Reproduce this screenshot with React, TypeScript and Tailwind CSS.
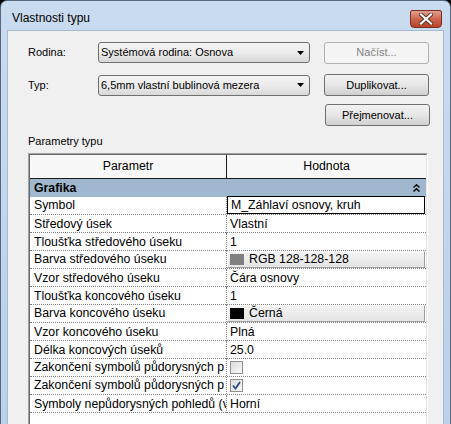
import React from 'react';

const rows: { name: string; value: string; kind?: 'edit' | 'color' | 'check' | 'checked'; swatch?: string }[] = [
  { name: 'Symbol', value: 'M_Záhlaví osnovy, kruh', kind: 'edit' },
  { name: 'Středový úsek', value: 'Vlastní' },
  { name: 'Tloušťka středového úseku', value: '1' },
  { name: 'Barva středového úseku', value: 'RGB 128-128-128', kind: 'color', swatch: '#808080' },
  { name: 'Vzor středového úseku', value: 'Čára osnovy' },
  { name: 'Tloušťka koncového úseku', value: '1' },
  { name: 'Barva koncového úseku', value: 'Černá', kind: 'color', swatch: '#000000' },
  { name: 'Vzor koncového úseku', value: 'Plná' },
  { name: 'Délka koncových úseků', value: '25.0' },
  { name: 'Zakončení symbolů půdorysných p', value: '', kind: 'check' },
  { name: 'Zakončení symbolů půdorysných p', value: '', kind: 'checked' },
  { name: 'Symboly nepůdorysných pohledů (v', value: 'Horní' },
];

const Combo = ({ text }: { text: string }) => (
  <div className="w-[212px] h-[21px] rounded-[3px] border border-[#707070] bg-gradient-to-b from-[#f4f4f4] via-[#ebebeb] to-[#d9d9d9] flex items-center pl-[2px] pr-[4px]">
    <span className="flex-1 text-[11px] leading-none text-black truncate">{text}</span>
    <svg width="7" height="4" viewBox="0 0 7 4" className="mr-[1px]">
      <path d="M0 0H7L3.5 4Z" fill="#000" />
    </svg>
  </div>
);

const Button = ({ text, disabled }: { text: string; disabled?: boolean }) => (
  <div
    className={`w-[105px] h-[22px] rounded-[3px] border flex items-center justify-center text-[11px] ${
      disabled
        ? 'border-[#adb2b5] bg-[#f4f4f4] text-[#838383]'
        : 'border-[#707070] bg-gradient-to-b from-[#f2f2f2] via-[#e6e6e6] to-[#d0d0d0] text-black'
    }`}
  >
    {text}
  </div>
);

const Checkbox = ({ checked }: { checked?: boolean }) => (
  <div className="w-[13px] h-[13px] border border-[#8e8f8f] bg-gradient-to-br from-[#dcdcdc] to-[#f8f8f8] flex items-center justify-center">
    {checked && (
      <svg width="9" height="9" viewBox="0 0 9 9">
        <path d="M1 4.5L3.5 7.5L8 1" stroke="#2a4a8c" strokeWidth="1.8" fill="none" />
      </svg>
    )}
  </div>
);

export default function App() {
  return (
    <div className="w-[451px] h-[424px] bg-black overflow-hidden" style={{ fontFamily: '"Liberation Sans", Arial, sans-serif' }}>
      <div className="w-[451px] h-[460px] rounded-t-[7px] border border-[#56697f] bg-gradient-to-b from-[#c9dbef] to-[#b9d0e9] flex flex-col">
        {/* title bar */}
        <div className="h-[29px] flex items-start pl-[11px] pr-[8px]">
          <span className="mt-[10px] text-[12px] leading-[14px] text-black">Vlastnosti typu</span>
          <div className="ml-auto mt-[9px] w-[32px] h-[18px] rounded-b-[4px] rounded-t-[2px] border border-[#7a2e22] bg-gradient-to-b from-[#e2a08f] via-[#cc6650] to-[#b9412a] flex items-center justify-center">
            <svg width="14" height="12" viewBox="0 0 14 12">
              <path d="M2 1.5L12 10.5M12 1.5L2 10.5" stroke="#5a2a22" strokeWidth="4" strokeLinecap="square" />
              <path d="M2 1.5L12 10.5M12 1.5L2 10.5" stroke="#ffffff" strokeWidth="2.2" strokeLinecap="square" />
            </svg>
          </div>
        </div>

        {/* client area */}
        <div className="mx-[6px] flex-1 border border-b-0 border-[#a3bbd4] bg-[#f0f0f0] pt-[11px] pl-[20px] pr-[13px] flex flex-col text-black">
          <div className="flex items-center h-[21px]">
            <span className="w-[70px] text-[11px]">Rodina:</span>
            <Combo text="Systémová rodina: Osnova" />
            <div className="ml-[14px]">
              <Button text="Načíst..." disabled />
            </div>
          </div>
          <div className="flex items-center h-[22px] mt-[11px]">
            <span className="w-[70px] text-[11px]">Typ:</span>
            <Combo text="6,5mm vlastní bublinová mezera" />
            <div className="ml-[14px]">
              <Button text="Duplikovat..." />
            </div>
          </div>
          <div className="flex justify-end mt-[8px]">
            <Button text="Přejmenovat..." />
          </div>
          <div className="mt-[9px] text-[11px] leading-[13px]">Parametry typu</div>

          {/* grid */}
          <div className="mt-[5px] w-[400px] flex-1 border border-t-[#a0a0a0] border-l-[#a0a0a0] border-r-white border-b-white">
            <div className="h-full border border-t-[#696969] border-l-[#696969] border-r-[#e3e3e3] border-b-[#e3e3e3] bg-white text-[12.3px]">
              <div className="grid grid-cols-[197px_1fr] h-[24px] bg-[#f7f7f7] border-b border-[#1a1a1a]">
                <div className="flex items-center justify-center border-r border-[#1a1a1a]">Parametr</div>
                <div className="flex items-center justify-center">Hodnota</div>
              </div>
              <div className="h-[18px] bg-[#9fb7cf] flex items-center pl-[4px] pr-[6px] font-bold">
                <span className="flex-1">Grafika</span>
                <svg width="7" height="8" viewBox="0 0 7 8">
                  <path d="M0.5 3.5L3.5 0.8L6.5 3.5M0.5 7.5L3.5 4.8L6.5 7.5" stroke="#000" strokeWidth="1.4" fill="none" />
                </svg>
              </div>
              {rows.map((r, i) => (
                <div key={i} className="grid grid-cols-[197px_1fr] h-[18px] border-b border-dotted border-[#808080]">
                  <div className="flex items-center pl-[4px] whitespace-nowrap overflow-hidden border-r border-dotted border-[#808080]">
                    {r.name}
                  </div>
                  <div className="flex items-center min-w-0 mr-[1px]">
                    {r.kind === 'edit' && (
                      <div className="w-full h-[18px] -mt-[1px] border border-black bg-white flex items-center pl-[3px]">{r.value}</div>
                    )}
                    {r.kind === 'color' && (
                      <div className="w-full h-[17px] border border-t-white border-l-white border-r-[#a0a0a0] border-b-[#a0a0a0] bg-gradient-to-b from-[#f4f4f4] to-[#e4e4e4] flex items-center pl-[2px] gap-[5px]">
                        <span className="w-[14px] h-[11px]" style={{ background: r.swatch }} />
                        <span>{r.value}</span>
                      </div>
                    )}
                    {(r.kind === 'check' || r.kind === 'checked') && (
                      <div className="pl-[3px]">
                        <Checkbox checked={r.kind === 'checked'} />
                      </div>
                    )}
                    {!r.kind && <span className="pl-[3px]">{r.value}</span>}
                  </div>
                </div>
              ))}
            </div>
          </div>
        </div>
      </div>
    </div>
  );
}
